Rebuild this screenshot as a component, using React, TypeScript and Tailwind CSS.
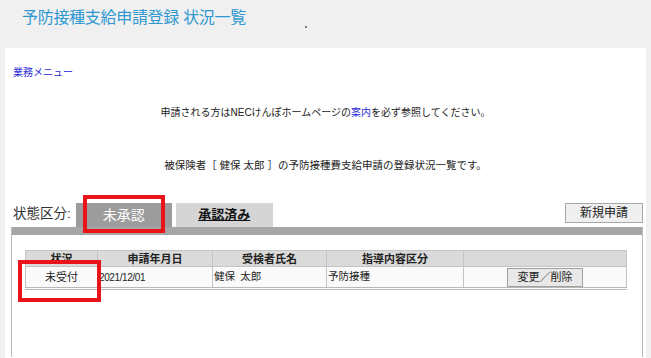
import React from 'react'

const JP = "font-['Liberation_Sans','Noto_Sans_CJK_JP',sans-serif]"

type Row = {
  status: string
  date: string
  name: string
  kind: string
}

const ROWS: Row[] = [{ status: '未受付', date: '2021/12/01', name: '健保\u2002太郎', kind: '予防接種' }]

export default function App() {
  return (
    <div className={`min-h-screen bg-[#f0f0f0] ${JP} text-[#222]`}>
      {/* Header */}
      <div className="relative h-[48px] pl-[22px] pt-[8px]">
        <h1 className="text-[16px] leading-[20px] tracking-[-0.3px] text-[#2f98d0]">予防接種支給申請登録 状況一覧</h1>
        <span className="absolute left-[305px] top-[26px] h-[2px] w-[2px] rounded-full bg-[#555]" />
      </div>

      {/* Main panel */}
      <div className="mx-[5px] h-[310px] bg-white">
        <div className="pl-[8px] pt-[11px]">
          <a className="text-[10px] leading-[14px] text-[#2a2ad8]">業務メニュー</a>
        </div>

        <p className="mt-[23px] text-center text-[10px] leading-[14px] text-[#222]">
          申請される方はNECけんぽホームページの<a className="text-[#2a2ad8]">案内</a>を必ず参照してください。
        </p>

        <p className="mt-[38px] text-center text-[10.5px] leading-[14px] text-[#222]">
          被保険者［ 健保 太郎 ］の予防接種費支給申請の登録状況一覧です。
        </p>

        {/* Tabs row */}
        <div className="relative ml-[6px] mr-[3px] mt-[31px]">
          <div className="flex items-end">
            <span className="mb-[4px] ml-[2px] text-[13.5px] leading-[18px] text-[#333]">状態区分:</span>
            <div className="ml-[5px] flex h-[24px] w-[96px] items-center justify-center bg-[#9c9c9c] text-[14px] text-white">
              未承認
            </div>
            <div className="ml-[4px] flex h-[24px] w-[97px] items-center justify-center bg-[#d5d5d5] text-[13px] font-bold text-[#111] underline">
              承認済み
            </div>
            <button className="mb-[4px] ml-auto h-[20px] w-[78px] border border-[#a8a8a8] bg-[#efefef] text-[12px] leading-[18px] text-[#222]">
              新規申請
            </button>
          </div>

          {/* Box */}
          <div className="h-[130px] border-x border-[#b9b9b9]">
            <div className="h-[8px] bg-[#a6a6a6]" />
            <div className="pl-[13px] pr-[15px] pt-[15px]">
              <table className="w-full border-collapse border border-[#b0b0b0] text-[10.5px]">
                <thead>
                  <tr className="h-[16px] bg-[#dadada] text-[11px] font-bold">
                    <th className="w-[72px] border border-[#c4c4c4] p-0 leading-[14px]">状況</th>
                    <th className="w-[115px] border border-[#c4c4c4] p-0 leading-[14px]">申請年月日</th>
                    <th className="w-[114px] border border-[#c4c4c4] p-0 leading-[14px]">受検者氏名</th>
                    <th className="w-[137px] border border-[#c4c4c4] p-0 leading-[14px]">指導内容区分</th>
                    <th className="border border-[#c4c4c4] p-0" />
                  </tr>
                </thead>
                <tbody>
                  {ROWS.map((r) => (
                    <tr key={r.date} className="h-[22px] border-b-[3px] border-double border-[#b8b8b8] bg-[#fafafa]">
                      <td className="border border-[#c4c4c4] text-center text-[11px]">{r.status}</td>
                      <td className="border border-[#c4c4c4] pl-[1px] text-[10px] tracking-[-0.4px]">{r.date}</td>
                      <td className="border border-[#c4c4c4] pl-[1px]">{r.name}</td>
                      <td className="border border-[#c4c4c4] pl-[1px]">{r.kind}</td>
                      <td className="border border-[#c4c4c4] text-center">
                        <button className="h-[19px] w-[76px] border border-[#a0a0a0] bg-[#e8e8e8] text-[11px] leading-[17px]">
                          変更／削除
                        </button>
                      </td>
                    </tr>
                  ))}
                </tbody>
              </table>
            </div>
          </div>
        </div>
      </div>

      {/* Red highlight boxes */}
      <div className="pointer-events-none absolute left-[83px] top-[195px] h-[38px] w-[82px] border-[4px] border-[#e8141a]" />
      <div className="pointer-events-none absolute left-[18px] top-[260px] h-[42px] w-[83px] border-[4px] border-[#e8141a]" />
    </div>
  )
}
